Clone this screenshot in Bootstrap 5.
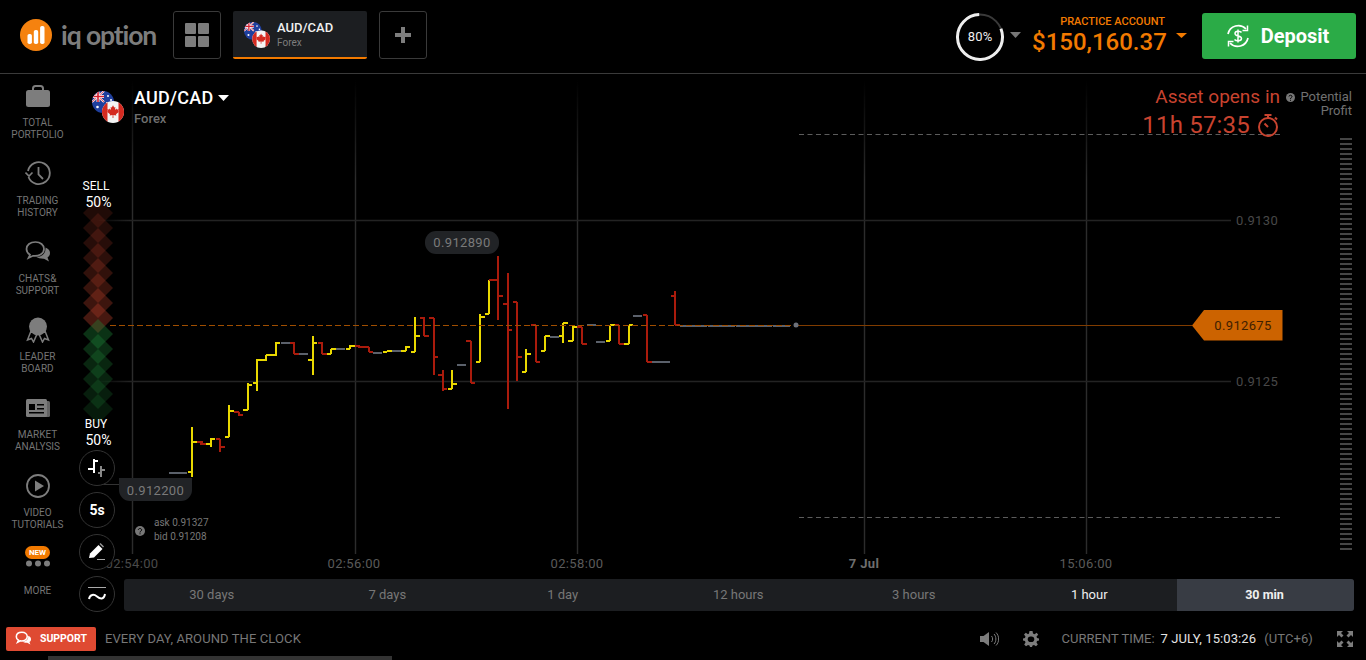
<!DOCTYPE html>
<html lang="en">
<head>
<meta charset="utf-8">
<title>IQ Option</title>
<link href="https://cdn.jsdelivr.net/npm/bootstrap@5.3.0/dist/css/bootstrap.min.css" rel="stylesheet">
<style>
html,body{height:660px;overflow:hidden}
body{background:#000;color:#fff;font-family:Roboto,"Liberation Sans",sans-serif;font-size:13px}
.top-bar{height:74px;border-bottom:1px solid #3a3a3a;padding:11px 10px 0 20px}
.logo-box{width:153px;height:48px}
.logo-word{font-family:Lato,"Open Sans",sans-serif;font-size:26.5px;font-weight:700;color:#7d7d7d;letter-spacing:-1.1px;margin-left:9px;line-height:48px}
.sq-btn{width:48px;height:48px;border:1px solid #3a3a3a;border-radius:3px;background:transparent;padding:0}
.tab-box{width:134px;height:48px;background:#1c1e21;border-bottom:2px solid #f27a00;border-radius:2px;margin:0 12px;padding:2px 0 0 11px}
.tab-ico{margin-right:7px}
.tab-title{font-size:13px;font-weight:500;line-height:16px;color:#f0f0f0}
.tab-sub{font-size:10px;color:#7d7d7d;line-height:14px}
.ring-wrap{width:48px;height:48px;margin:2px -2px 0 0}
.ring-txt{font-size:13px;letter-spacing:.2px;color:#eee}
.acct{margin:0 0 0 11px;width:134px;line-height:1}
.acct-lbl{font-size:11px;font-weight:500;color:#f27a00;line-height:13px;margin-top:4px;padding-right:1px}
.acct-val{font-size:24px;font-weight:500;color:#f27a00;line-height:29px;white-space:nowrap;padding-right:2px}
.dep-caret{margin-left:10px}
.dep-btn{width:154px;height:46px;margin:2px 0 0 15px;background:#2bab47;border:0;border-radius:3px;color:#fff;font-size:20px;font-weight:700;padding:0 4px 0 0}
.dep-btn:hover{background:#2bab47;color:#fff}
.dep-ico{margin-right:10px}
.mid-row{height:547px}
.side-col{width:76px;padding-top:4px}
.side-item{height:78px;width:75px;color:#757575;font-size:10px;line-height:12px;text-transform:uppercase;text-align:center}
.side-ico{height:39px;padding-bottom:4px}
.side-tight{word-spacing:-2px}
.side-new{background:#f27a00;color:#fff;font-weight:700;font-size:8px;line-height:13px;border-radius:7px;width:25px;display:block;margin:0 auto 1px}
.side-more{margin-top:15px}
.side-up{height:26px;margin-top:-2px;padding-top:2px}
.chart-col{width:1290px}
.chart-box{height:505px}
.chart-svg{position:absolute;left:0;top:0;width:1290px;height:505px}
.chart-svg text{font-family:Roboto,sans-serif;font-size:13px;letter-spacing:.35px}
.asset-head{position:absolute;left:16px;top:13px;line-height:1}
.asset-flag{margin:4px 10px 0 0}
.asset-name{font-size:18px;font-weight:500;line-height:22px;letter-spacing:.25px}
.asset-sub{font-size:13px;font-weight:500;color:#6f6f6f;line-height:19px}
.opens{position:absolute;right:86px;top:11px;text-align:right;color:#c8432f}
.opens-a{font-size:19px;line-height:24px;white-space:nowrap}
.opens-b{font-size:24px;line-height:32px;white-space:nowrap;letter-spacing:.2px}
.opens-t{margin-left:7px;margin-right:1px}
.profit{position:absolute;right:14px;top:16px;width:66px;text-align:right;color:#707070;font-size:13px;line-height:14px}
.profit-q{position:absolute;left:0;top:3px}
.pct-lbl{position:absolute;left:0;width:40px;text-align:center;line-height:16px;font-size:12px}
.pct-lbl b{font-weight:400;font-size:14px;display:block;padding-left:5px}
.pct-sell{top:104px}
.pct-buy{top:342px}
.tools{position:absolute;left:3px;top:376px;gap:6px}
.tool-btn{width:36px;height:36px;border:1px solid #333;border-radius:50%;background:#000;color:#fff;font-weight:700;font-size:14px;padding:0}
.askbid{position:absolute;left:78px;top:442px;font-size:10px;line-height:14px;color:#777}
.askbid-q{position:absolute;left:59px;top:452px}
.range-bar{height:32px;margin:0 12px 0 48px;background:#1c1e21;border-radius:3px;overflow:hidden}
.range-item{flex:1 1 0;text-align:center;line-height:32px;font-size:13px;color:#777}
.range-on{color:#eee}
.range-act{flex:0 0 177px;background:#383c44;color:#f0f0f0;font-weight:700;font-size:12.5px;padding-right:2px}
.foot-bar{height:35px;padding:0 13px 0 6px}
.sup-btn{width:90px;height:24px;background:#df4a32;border-radius:2px;font-size:10.5px;font-weight:700;color:#fff;border:0;padding:0}
.foot-txt{color:#777;font-size:13px;margin-left:9px;letter-spacing:.1px}
.foot-cur{color:#777;font-size:13px;margin-left:23px}
.foot-time{color:#e4e4e4;margin:0 8px 0 6px;letter-spacing:.1px}
.scroll-strip{height:4px;width:344px;margin-left:48px;background:#333}
</style>
</head>
<body>
<svg width="0" height="0" class="position-absolute">
<defs>
<clipPath id="cA"><circle cx="11" cy="11" r="11"/></clipPath>
<clipPath id="cB"><circle cx="11" cy="11" r="11"/></clipPath>
<linearGradient id="vFade" gradientUnits="userSpaceOnUse" x1="0" y1="80" x2="0" y2="180"><stop offset="0" stop-color="#2c2c2c" stop-opacity="0"/><stop offset="1" stop-color="#2c2c2c"/></linearGradient>
<linearGradient id="hFade" gradientUnits="userSpaceOnUse" x1="96" y1="0" x2="130" y2="0"><stop offset="0" stop-color="#232323" stop-opacity="0"/><stop offset="1" stop-color="#232323"/></linearGradient>
<symbol id="flags" viewBox="0 0 32 32">
<g>
<g clip-path="url(#cA)">
<rect width="22" height="22" fill="#1f3f9e"/>
<rect width="12" height="11" fill="#27358c"/>
<path d="M0 0L12 11M12 0L0 11" stroke="#fff" stroke-width="2"/>
<path d="M0 0L12 11M12 0L0 11" stroke="#d5202f" stroke-width=".8"/>
<path d="M6 0V11M0 5.500H12" stroke="#fff" stroke-width="3"/>
<path d="M6 0V11M0 5.500H12" stroke="#d5202f" stroke-width="1.600"/>
<circle cx="5.500" cy="16" r="1.300" fill="#fff"/><circle cx="16" cy="5" r="1" fill="#fff"/><circle cx="19" cy="9" r="1" fill="#fff"/><circle cx="15" cy="12" r="1" fill="#fff"/>
</g>
<g transform="translate(10 10)" clip-path="url(#cB)">
<rect width="22" height="22" fill="#f4f4f4"/>
<rect width="5.500" height="22" fill="#d42a20"/><rect x="16.500" width="5.500" height="22" fill="#d42a20"/>
<path d="M11 4.200l1.200 2.300 1.200-.6-.5 3 1.600-1.500.4 1.100 2-.3-.7 2.100.8.5-3 2.500.3 1.100-2.900-.3v2.800h-.8v-2.800l-2.900.3.3-1.100-3-2.500.8-.5-.7-2.100 2 .3.4-1.100 1.600 1.500-.5-3 1.200.6z" fill="#d42a20"/>
</g>
</g>
</symbol>
</defs>
</svg>

<header class="top-bar d-flex align-items-start">
  <div class="logo-box d-flex align-items-center">
    <svg width="32" height="32" viewBox="0 0 32 32"><circle cx="16" cy="16" r="16" fill="#f5820f"/><rect x="7.500" y="15" width="4.400" height="10" rx="1.800" fill="#fff"/><rect x="13.800" y="11" width="4.400" height="14" rx="1.800" fill="#fff"/><rect x="20.100" y="7" width="4.400" height="18" rx="1.800" fill="#fff"/></svg>
    <span class="logo-word">iq option</span>
  </div>
  <button class="sq-btn d-flex align-items-center justify-content-center" type="button" aria-label="Assets">
    <svg width="24" height="24" viewBox="0 0 24 24" fill="#7d7d7d"><rect width="11" height="11" rx="1"/><rect x="13" width="11" height="11" rx="1"/><rect y="13" width="11" height="11" rx="1"/><rect x="13" y="13" width="11" height="11" rx="1"/></svg>
  </button>
  <div class="tab-box d-flex align-items-center">
    <svg width="26" height="26" class="tab-ico flex-shrink-0"><use href="#flags"/></svg>
    <div>
      <div class="tab-title">AUD/CAD</div>
      <div class="tab-sub">Forex</div>
    </div>
  </div>
  <button class="sq-btn d-flex align-items-center justify-content-center" type="button" aria-label="Add">
    <svg width="16" height="16" viewBox="0 0 16 16" fill="#7d7d7d"><rect x="6" width="4" height="16"/><rect y="6" width="16" height="4"/></svg>
  </button>
  <div class="ms-auto d-flex align-items-start">
    <div class="ring-wrap position-relative d-flex align-items-center justify-content-center">
      <svg class="position-absolute top-0 start-0" width="48" height="48" viewBox="0 0 48 48"><circle cx="24" cy="24" r="22.500" fill="none" stroke="#3a3a3a" stroke-width="2"/><circle cx="24" cy="24" r="22.500" fill="none" stroke="#eee" stroke-width="3" stroke-dasharray="113 142" transform="rotate(-2 24 24) scale(-1 1) translate(-48 0) rotate(-90 24 24)"/></svg>
      <span class="ring-txt">80%</span>
    </div>
    <svg class="ms-2" width="11" height="30" viewBox="0 0 11 30"><path d="M0 21H11L5.500 27z" fill="#777"/></svg>
    <div class="acct text-end">
      <div class="acct-lbl">PRACTICE ACCOUNT</div>
      <div class="acct-val">$150,160.37</div>
    </div>
    <svg class="dep-caret" width="11" height="30" viewBox="0 0 11 30"><path d="M0 22H11L5.500 27z" fill="#f27a00"/></svg>
    <button class="dep-btn btn d-flex align-items-center justify-content-center" type="button">
      <svg class="dep-ico" width="26" height="26" viewBox="0 0 26 26" fill="none" stroke="#fff" stroke-width="1.700"><path d="M3 11A10.500 10.500 0 0 1 21 6"/><path d="M23 15A10.500 10.500 0 0 1 5 20"/><path d="M22.500 2.500V7.500H17.500" stroke-width="1.500"/><path d="M3.500 23.500V18.500H8.500" stroke-width="1.500"/><path d="M16.500 9.500C15.500 7.800 10 7.500 10 10.500C10 14 16.500 12 16.500 15.500C16.500 18.500 11 18.200 9.500 16.500M13 6.500V19.500" stroke-width="1.500"/></svg>
      Deposit
    </button>
  </div>
</header>

<div class="mid-row d-flex">
  <nav class="side-col flex-shrink-0">
    <div class="side-item">
      <div class="side-ico d-flex align-items-center justify-content-center">
        <svg width="26" height="24" viewBox="0 0 26 24" fill="#7d7d7d"><path d="M7 7V4.500Q7 1 10.500 1H15.500Q19 1 19 4.500V7H17V4.500Q17 3 15.500 3H10.500Q9 3 9 4.500V7z"/><rect x="1" y="6" width="24" height="17" rx="2.500"/></svg>
      </div>
      TOTAL<br>PORTFOLIO
    </div>
    <div class="side-item">
      <div class="side-ico d-flex align-items-center justify-content-center">
        <svg width="26" height="26" viewBox="0 0 26 26" fill="none" stroke="#7d7d7d" stroke-width="1.800"><path d="M3.500 16A11 11 0 1 0 3 10"/><path d="M0.500 11.500L4 15L7.500 11.500" stroke-width="1.600"/><path d="M13.500 6V13.500L18 18"/></svg>
      </div>
      TRADING<br>HISTORY
    </div>
    <div class="side-item">
      <div class="side-ico d-flex align-items-center justify-content-center">
        <svg width="26" height="24" viewBox="0 0 26 24"><path d="M10.500 2C5 2 1.500 5 1.500 9C1.500 11.500 3 13.500 5 14.800L3.500 18L8 15.800C13.500 16.500 19 14 19 9C19 5 15.500 2 10.500 2z" fill="none" stroke="#7d7d7d" stroke-width="1.700"/><path d="M20.500 7.500C24 9 25 11 25 13C25 15 24 16.500 22.500 17.500L24 21.500L19 18.800C16 19 13 18 11 16.800C16 17 21 14.500 20.500 7.500z" fill="#7d7d7d"/></svg>
      </div>
      <span class="side-tight">CHATS &amp;</span><br>SUPPORT
    </div>
    <div class="side-item">
      <div class="side-ico d-flex align-items-center justify-content-center">
        <svg width="24" height="26" viewBox="0 0 24 26"><path d="M5 14L1.500 23L5.500 21.500L7.500 25L11 17zM19 14L22.500 23L18.500 21.500L16.500 25L13 17z" fill="none" stroke="#7d7d7d" stroke-width="1.500"/><circle cx="12" cy="9.500" r="9" fill="#7d7d7d"/></svg>
      </div>
      LEADER<br>BOARD
    </div>
    <div class="side-item">
      <div class="side-ico d-flex align-items-center justify-content-center">
        <svg width="24" height="18" viewBox="0 0 24 18"><rect x="17" y="2" width="7" height="16" rx="1.500" fill="#7d7d7d" opacity=".8"/><rect width="21" height="18" rx="1.500" fill="#7d7d7d"/><rect x="3" y="5" width="6" height="6" fill="#000"/><rect x="3" y="13" width="15" height="1.500" fill="#000"/><rect x="11" y="5" width="7" height="1.500" fill="#000"/><rect x="11" y="9" width="7" height="1.500" fill="#000"/></svg>
      </div>
      MARKET<br>ANALYSIS
    </div>
    <div class="side-item">
      <div class="side-ico d-flex align-items-center justify-content-center">
        <svg width="24" height="24" viewBox="0 0 24 24"><circle cx="12" cy="12" r="11" fill="none" stroke="#7d7d7d" stroke-width="1.800"/><path d="M9 6.500L18 12L9 17.500z" fill="#7d7d7d"/></svg>
      </div>
      VIDEO<br>TUTORIALS
    </div>
    <div class="side-item">
      <div class="side-up d-flex flex-column align-items-center">
        <span class="side-new">NEW</span>
        <svg width="26" height="7" viewBox="0 0 26 7" fill="#7d7d7d"><circle cx="4" cy="3.500" r="3"/><circle cx="13" cy="3.500" r="3"/><circle cx="22" cy="3.500" r="3"/></svg>
      </div>
      <div class="side-more">MORE</div>
    </div>
  </nav>

  <main class="chart-col flex-shrink-0 d-flex flex-column">
    <div class="chart-box position-relative">
      <svg class="chart-svg" viewBox="76 74 1290 505" aria-label="Price chart">
        <path d="M132.500 80V554M355.500 80V554M577.500 80V554M864.500 80V554M1086.500 80V554" stroke="url(#vFade)" stroke-width="1.400"/>
        <path d="M96 220.500H1231M96 381.500H1231" stroke="url(#hFade)" stroke-width="1.400"/>
        <path d="M799 134.500H1283M799 517.500H1283" stroke="#5c5c5c" stroke-dasharray="5 3.500"/>
        <line x1="1346" y1="138" x2="1346" y2="550" stroke="#454545" stroke-width="12" stroke-dasharray="2 3"/>
        <path d="M100 484.500H169" stroke="#333"/>
        <path fill="#b03c28" fill-opacity=".18" d="M98 198l15 15-15 15-15-15z"/>
        <path fill="#b03c28" fill-opacity=".2" d="M98 213l15 15-15 15-15-15z"/>
        <path fill="#b03c28" fill-opacity=".22" d="M98 228l15 15-15 15-15-15z"/>
        <path fill="#b03c28" fill-opacity=".25" d="M98 243l15 15-15 15-15-15z"/>
        <path fill="#b03c28" fill-opacity=".28" d="M98 258l15 15-15 15-15-15z"/>
        <path fill="#b03c28" fill-opacity=".31" d="M98 273l15 15-15 15-15-15z"/>
        <path fill="#b03c28" fill-opacity=".35" d="M98 288l15 15-15 15-15-15z"/>
        <path fill="#b03c28" fill-opacity=".4" d="M98 303l15 15-15 15-15-15z"/>
        <path fill="#1f8a3a" fill-opacity=".36" d="M98 319l15 15-15 15-15-15z"/>
        <path fill="#1f8a3a" fill-opacity=".32" d="M98 334l15 15-15 15-15-15z"/>
        <path fill="#1f8a3a" fill-opacity=".28" d="M98 349l15 15-15 15-15-15z"/>
        <path fill="#1f8a3a" fill-opacity=".25" d="M98 364l15 15-15 15-15-15z"/>
        <path fill="#1f8a3a" fill-opacity=".22" d="M98 379l15 15-15 15-15-15z"/>
        <path fill="#1f8a3a" fill-opacity=".19" d="M98 394l15 15-15 15-15-15z"/>
        <g fill="none" stroke-width="2">
          <path stroke="#5b616b" d="M169 473H187M281 343H290M299 354H308M336 349H345M373 353H382M392 351H401M457 365H466M550 337H559M587 325H596M596 342H605M633 316H642M652 362H670M680 326H707M708 326H735M736 326H772M773 326H790"/>
          <path stroke="#e9d800" d="M188 472H192M192 427V477M192 442H197M206 444H211M211 438V447M211 439H215M225 437H229M229 405V437M229 411H234M243 410H248M248 383V410M248 385H252M253 383H257M257 359V391M257 360H267M266 355V360M266 355H277M276 342V355M276 343H280M308 360H313M313 336V375M313 343H317M327 354H331M331 349V354M331 349H336M346 349H350M350 345V349M350 346H355M383 352H387M387 351H392M401 351H406M406 346V351M406 347H410M411 352H415M415 317V352M415 336H420M448 389H452M452 370V389M452 384H457M476 362H480M480 314V362M480 317H485M485 314H489M489 280V314M522 372H526M526 349V372M526 354H531M541 351H545M545 336V351M545 336H550M559 336H563M563 323V343M563 323H568M568 341H573M573 326V341M573 327H577M606 341H610M610 325V341M610 325H615M624 344H629M629 325V344M629 325H633"/>
          <path stroke="#aa1b0c" d="M197 442H203M200 444H206M216 439H220M220 439V452M220 447H225M234 412H239M239 412V416M239 415H243M290 343H295M294 343V354M294 354H299M318 343H322M322 342V354M322 354H327M355 346H360M358 347H369M369 347V352M369 352H373M420 318H425M424 318V336M424 336H429M429 318H434M434 318V375M434 357H438M438 375H443M443 370V391M443 389H447M466 341H471M471 341V383M471 383H475M489 280H498M498 256V320M498 296H503M503 304H508M508 273V409M508 330H512M513 302H517M517 302V381M517 357H522M531 325H536M536 325V362M536 362H540M577 327H582M582 327V344M582 344H587M615 325H619M619 325V344M619 344H624M643 315H647M647 315V362M647 362H652M671 296H675M675 291V325M675 325H680"/>
        </g>
        <path d="M110 325.500H796" stroke="#a04e00" stroke-dasharray="6 3"/>
        <path d="M796 325.500H1192" stroke="#803c00"/>
        <circle cx="796" cy="325" r="2.500" fill="#6d727b"/>
        <rect x="425" y="231" width="74" height="23" rx="11" fill="#212326"/>
        <text x="462" y="247" text-anchor="middle" fill="#7a7a7a">0.912890</text>
        <path d="M119 478H192V490A11 11 0 0 1 181 501H130A11 11 0 0 1 119 490z" fill="#212326"/>
        <text x="155.500" y="495" text-anchor="middle" fill="#7a7a7a">0.912200</text>
        <path d="M1192 325.500L1204 310H1282.500V340.500H1204z" fill="#cc6300"/>
        <text x="1243" y="330" text-anchor="middle" fill="#3f2000">0.912675</text>
        <text x="1236" y="225" fill="#484848">0.9130</text>
        <text x="1236" y="386" fill="#484848">0.9125</text>
        <text x="132" y="568" text-anchor="middle" fill="#4a4a4a">02:54:00</text>
        <text x="354" y="568" text-anchor="middle" fill="#5a5a5a">02:56:00</text>
        <text x="577" y="568" text-anchor="middle" fill="#5a5a5a">02:58:00</text>
        <text x="864" y="568" text-anchor="middle" fill="#6e6e6e" font-weight="700">7 Jul</text>
        <text x="1086" y="568" text-anchor="middle" fill="#5a5a5a">15:06:00</text>
      </svg>

      <div class="asset-head d-flex align-items-start">
        <svg width="32" height="32" class="asset-flag" viewBox="0 0 32 32"><use href="#flags"/></svg>
        <div>
          <div class="asset-name d-flex align-items-center">AUD/CAD<svg class="ms-1" width="11" height="6" viewBox="0 0 11 6"><path d="M0 0H11L5.500 6z" fill="#fff"/></svg></div>
          <div class="asset-sub">Forex</div>
        </div>
      </div>

      <div class="opens">
        <div class="opens-a">Asset opens in</div>
        <div class="opens-b d-flex align-items-center justify-content-end">11h 57:35
          <svg class="opens-t" width="22" height="24" viewBox="0 0 22 24" fill="none" stroke="#c8432f" stroke-width="2"><circle cx="11" cy="14" r="9"/><path d="M7.500 2H14.500M11 2V5M18 4.500L20 6.500M11 14L7.500 10.500"/></svg>
        </div>
      </div>
      <div class="profit">
        <svg class="profit-q" width="9" height="9" viewBox="0 0 9 9"><circle cx="4.500" cy="4.500" r="4.500" fill="#777"/><path d="M3 3.500C3 1.800 6 1.800 6 3.500C6 4.500 4.500 4.500 4.500 6M4.500 6.800V7.800" stroke="#000" fill="none"/></svg>
        Potential Profit
      </div>

      <div class="pct-lbl pct-sell">SELL<b>50%</b></div>
      <div class="pct-lbl pct-buy">BUY<b>50%</b></div>

      <div class="tools d-flex flex-column">
        <button class="tool-btn d-flex align-items-center justify-content-center" type="button" aria-label="Chart type">
          <svg width="18" height="20" viewBox="0 0 18 20" fill="none" stroke="#fff" stroke-width="2"><path d="M6 1V15M0 11H6M6 3H10"/><path d="M13 8V19M10 15H13M13 12H17" stroke="#888"/></svg>
        </button>
        <button class="tool-btn" type="button">5s</button>
        <button class="tool-btn d-flex align-items-center justify-content-center" type="button" aria-label="Draw">
          <svg width="18" height="18" viewBox="0 0 18 18"><path d="M1 15L2 10.500L10.500 2L14.500 6L6 14.500z" fill="#fff"/><path d="M11.500 1L12.500 0L16 3.500L15 4.500z" fill="#999"/><path d="M9 16.500H17" stroke="#aaa"/></svg>
        </button>
        <button class="tool-btn d-flex align-items-center justify-content-center" type="button" aria-label="Indicators">
          <svg width="20" height="16" viewBox="0 0 20 16" fill="none" stroke="#fff"><path d="M1 1.500H19" stroke="#aaa"/><path d="M2 13C3 8 7 8 10 10.500C13 13 17 14 18 8" stroke-width="2"/></svg>
        </button>
      </div>

      <svg class="askbid-q" width="10" height="10" viewBox="0 0 10 10"><circle cx="5" cy="5" r="5" fill="#777"/><path d="M3.300 4C3.300 2 6.700 2 6.700 4C6.700 5 5 5 5 6.500M5 7.300V8.300" stroke="#000" fill="none"/></svg>
      <div class="askbid">ask 0.91327<br>bid 0.91208</div>
    </div>
    <div class="range-bar d-flex">
      <div class="range-item">30 days</div>
      <div class="range-item">7 days</div>
      <div class="range-item">1 day</div>
      <div class="range-item">12 hours</div>
      <div class="range-item">3 hours</div>
      <div class="range-item range-on">1 hour</div>
      <div class="range-item range-act">30 min</div>
    </div>
  </main>
</div>

<footer class="foot-bar d-flex align-items-center">
  <button class="sup-btn d-flex align-items-center justify-content-center" type="button">
    <svg class="me-2" width="17" height="15" viewBox="0 0 26 24"><path d="M10.500 2C5 2 1.500 5 1.500 9C1.500 11.500 3 13.500 5 14.800L3.500 18L8 15.800C13.500 16.500 19 14 19 9C19 5 15.500 2 10.500 2z" fill="none" stroke="#fff" stroke-width="2.500"/><path d="M20.500 7.500C24 9 25 11 25 13C25 15 24 16.500 22.500 17.500L24 21.500L19 18.800C16 19 13 18 11 16.800C16 17 21 14.500 20.500 7.500z" fill="#fff"/></svg>
    SUPPORT
  </button>
  <span class="foot-txt">EVERY DAY, AROUND THE CLOCK</span>
  <div class="ms-auto d-flex align-items-center">
    <svg class="me-4" width="19" height="16" viewBox="0 0 19 16" fill="none"><path d="M0 5H3.500L9 1V15L3.500 11H0z" fill="#7d7d7d"/><path d="M11.500 5C13 6.500 13 9.500 11.500 11M14 3C16.500 5.500 16.500 10.500 14 13M16 1.500C19.500 5 19.500 11 16 14.500" stroke="#7d7d7d"/></svg>
    <svg width="16" height="16" viewBox="0 0 16 16"><path d="M6.500 0H9.500L10 2.500L11.500 3.200L13.700 1.800L15.200 3.800L13.500 5.500L14 7L16 7.500V9.500L14 10L13.500 11.500L14.800 13.500L13 15.200L11 14L9.500 14.500L9 16H7L6.500 14.500L5 14L3 15.200L1.200 13.500L2.500 11.500L2 10L0 9.500V7.500L2 7L2.500 5.500L1 3.500L2.800 1.800L5 3.200L6 2.500zM8 5.500A2.800 2.800 0 1 0 8 11A2.800 2.800 0 1 0 8 5.500z" fill="#7d7d7d" fill-rule="evenodd"/></svg>
    <span class="foot-cur">CURRENT TIME:</span>
    <span class="foot-time">7 JULY, 15:03:26</span>
    <span class="foot-txt ms-0">(UTC+6)</span>
    <svg class="ms-4" width="16" height="16" viewBox="0 0 16 16" fill="#7d7d7d"><path d="M0 0H6L4 2L6.500 4.500L4.500 6.500L2 4L0 6zM16 0V6L14 4L11.500 6.500L9.500 4.500L12 2L10 0zM0 16V10L2 12L4.500 9.500L6.500 11.500L4 14L6 16zM16 16H10L12 14L9.500 11.500L11.500 9.500L14 12L16 10z"/></svg>
  </div>
</footer>
<div class="scroll-strip"></div>
<script src="https://cdn.jsdelivr.net/npm/bootstrap@5.3.0/dist/js/bootstrap.bundle.min.js"></script>
</body>
</html>
